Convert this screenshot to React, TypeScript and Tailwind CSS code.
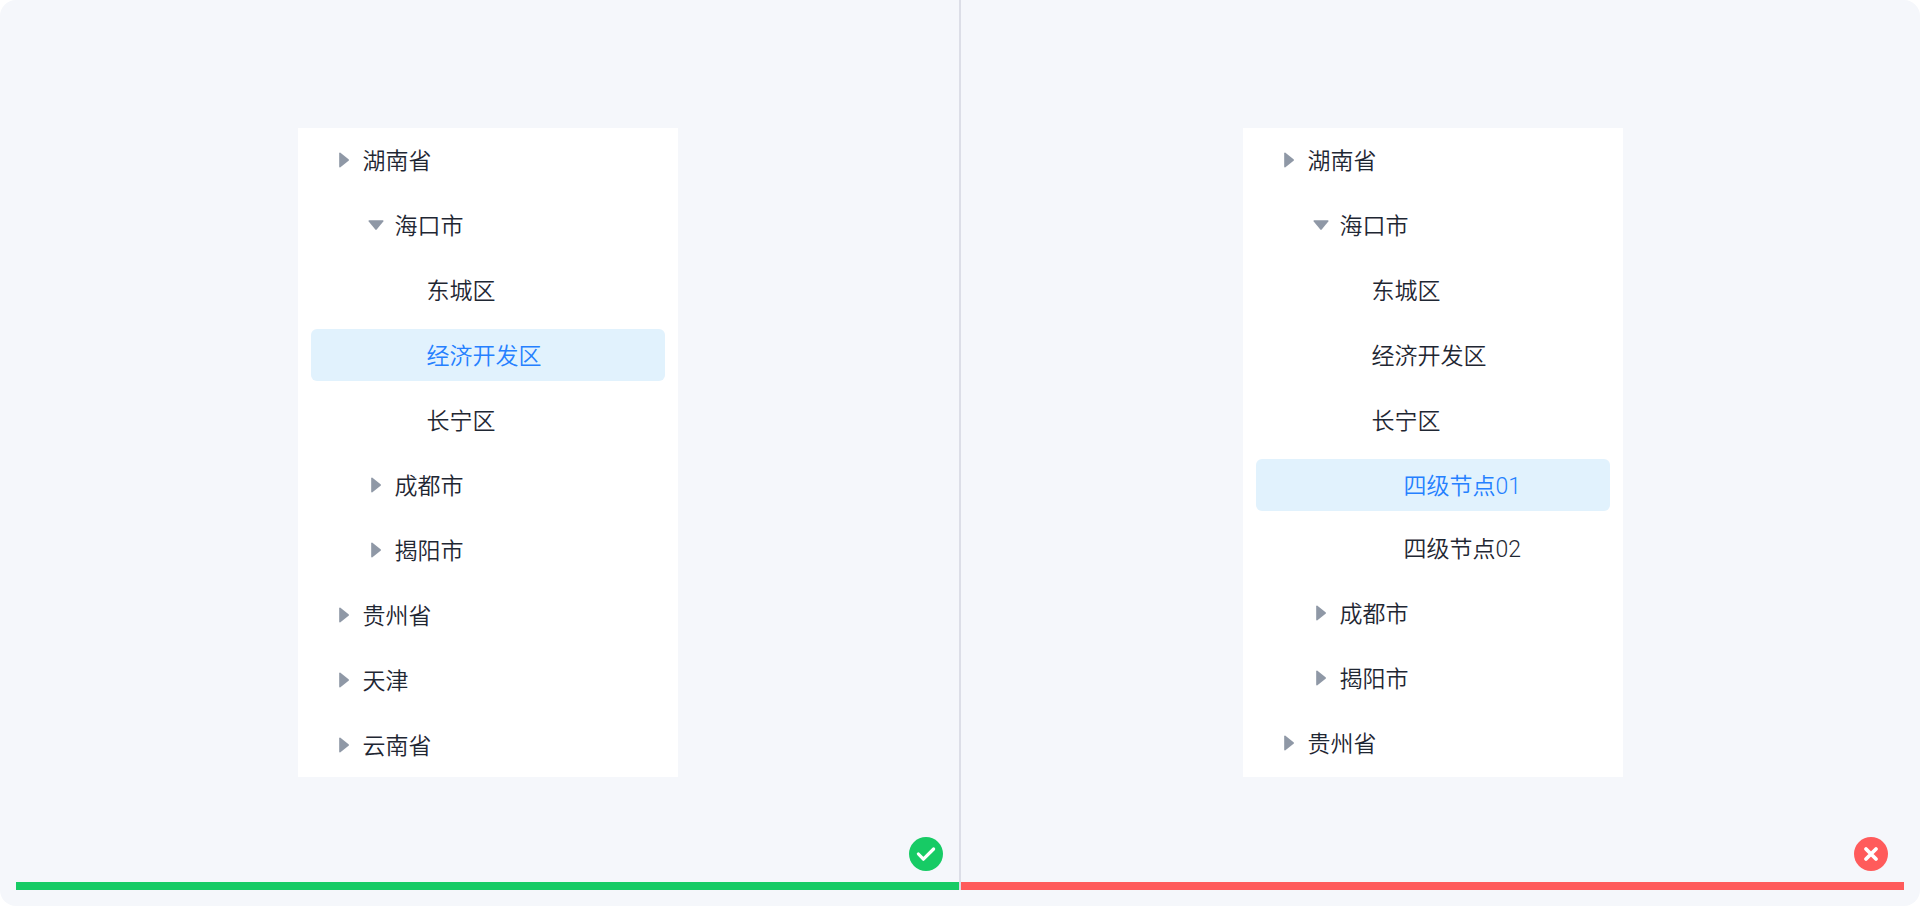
import React, { useState } from "react";

type TreeNode = {
  label: string;
  open?: boolean;
  branch?: boolean;
  children?: TreeNode[];
};

const correctTree: TreeNode[] = [
  {
    label: "湖南省",
    branch: true,
    children: [
      {
        label: "海口市",
        branch: true,
        open: true,
        children: [{ label: "东城区" }, { label: "经济开发区" }, { label: "长宁区" }],
      },
      { label: "成都市", branch: true },
      { label: "揭阳市", branch: true },
    ],
  },
  { label: "贵州省", branch: true },
  { label: "天津", branch: true },
  { label: "云南省", branch: true },
];

const wrongTree: TreeNode[] = [
  {
    label: "湖南省",
    branch: true,
    children: [
      {
        label: "海口市",
        branch: true,
        open: true,
        children: [
          { label: "东城区" },
          { label: "经济开发区" },
          {
            label: "长宁区",
            children: [{ label: "四级节点01" }, { label: "四级节点02" }],
          },
        ],
      },
      { label: "成都市", branch: true },
      { label: "揭阳市", branch: true },
    ],
  },
  { label: "贵州省", branch: true },
];

const indents = ["pl-[22px]", "pl-[54px]", "pl-[86px]", "pl-[118px]"];
const listGaps = ["gap-[13px]", "gap-[13px]", "gap-[13px]", "gap-[11px]"];

function Caret({ open }: { open?: boolean }) {
  return (
    <svg viewBox="0 0 22 22" className="size-[22px] shrink-0 fill-[#8f98a6]" aria-hidden="true">
      {open ? (
        <path d="M4.3 6.2h13.4c.7 0 1 .7.6 1.2l-6.6 8.2a.9.9 0 0 1-1.4 0L3.7 7.4c-.4-.5-.1-1.2.6-1.2z" />
      ) : (
        <path d="M6.2 4.3v13.4c0 .7.7 1 1.2.6l8.2-6.6a.9.9 0 0 0 0-1.4L7.4 3.7c-.5-.4-1.2-.1-1.2.6z" />
      )}
    </svg>
  );
}

type BranchProps = {
  nodes: TreeNode[];
  depth: number;
  selected: string;
  onSelect: (label: string) => void;
};

function Branch({ nodes, depth, selected, onSelect }: BranchProps) {
  return (
    <ul className={`flex flex-col ${listGaps[depth]}`}>
      {nodes.map((node) => {
        const active = node.label === selected;
        return (
          <li key={node.label} className="flex flex-col gap-[13px]">
            <button
              type="button"
              aria-pressed={active}
              onClick={() => onSelect(node.label)}
              className={`flex h-[52px] w-full items-center gap-2 rounded-md text-left ${indents[depth]} ${
                active ? "bg-[#e1f2fd] text-[#2580ff]" : "text-[#1f2733]"
              }`}
            >
              {node.branch ? <Caret open={node.open} /> : <span className="w-[22px] shrink-0" />}
              <span className="pt-1">{node.label}</span>
            </button>
            {node.children && (
              <Branch nodes={node.children} depth={depth + 1} selected={selected} onSelect={onSelect} />
            )}
          </li>
        );
      })}
    </ul>
  );
}

function TreePanel({ nodes, initial }: { nodes: TreeNode[]; initial: string }) {
  const [selected, setSelected] = useState(initial);
  return (
    <nav className="min-h-[649px] w-[380px] max-w-full self-center bg-white px-[13px] pt-[6px] pb-[5px]">
      <Branch nodes={nodes} depth={0} selected={selected} onSelect={setSelected} />
    </nav>
  );
}

function Example({ good, children }: { good: boolean; children: React.ReactNode }) {
  return (
    <section className="flex min-w-0 flex-1 flex-col pt-32">
      {children}
      <svg
        viewBox="0 0 34 34"
        role="img"
        aria-label={good ? "正确" : "错误"}
        className="mt-auto mr-4 mb-[11px] size-[34px] self-end"
      >
        <circle cx="17" cy="17" r="17" fill={good ? "#17cb65" : "#ff5b5b"} />
        <path
          d={good ? "M9.4 17l5 5.2L24.6 12" : "M12 12l10 10M22 12L12 22"}
          fill="none"
          stroke="#fff"
          strokeWidth={good ? "3.2" : "3.8"}
          strokeLinecap="round"
          strokeLinejoin="round"
        />
      </svg>
      <div className={`h-2 ${good ? "bg-[#17cb65]" : "bg-[#ff5b5b]"}`} />
    </section>
  );
}

export default function App() {
  return (
    <div className="bg-white">
      <main className="flex min-h-screen rounded-2xl bg-[#f5f7fb] px-4 pb-4 font-['Roboto','Noto_Sans_CJK_SC',sans-serif] text-[23px] leading-8 font-[350]">
        <Example good>
          <TreePanel nodes={correctTree} initial="经济开发区" />
        </Example>
        <div className="w-[2px] bg-[#dcdee7]" />
        <Example good={false}>
          <TreePanel nodes={wrongTree} initial="四级节点01" />
        </Example>
      </main>
    </div>
  );
}
